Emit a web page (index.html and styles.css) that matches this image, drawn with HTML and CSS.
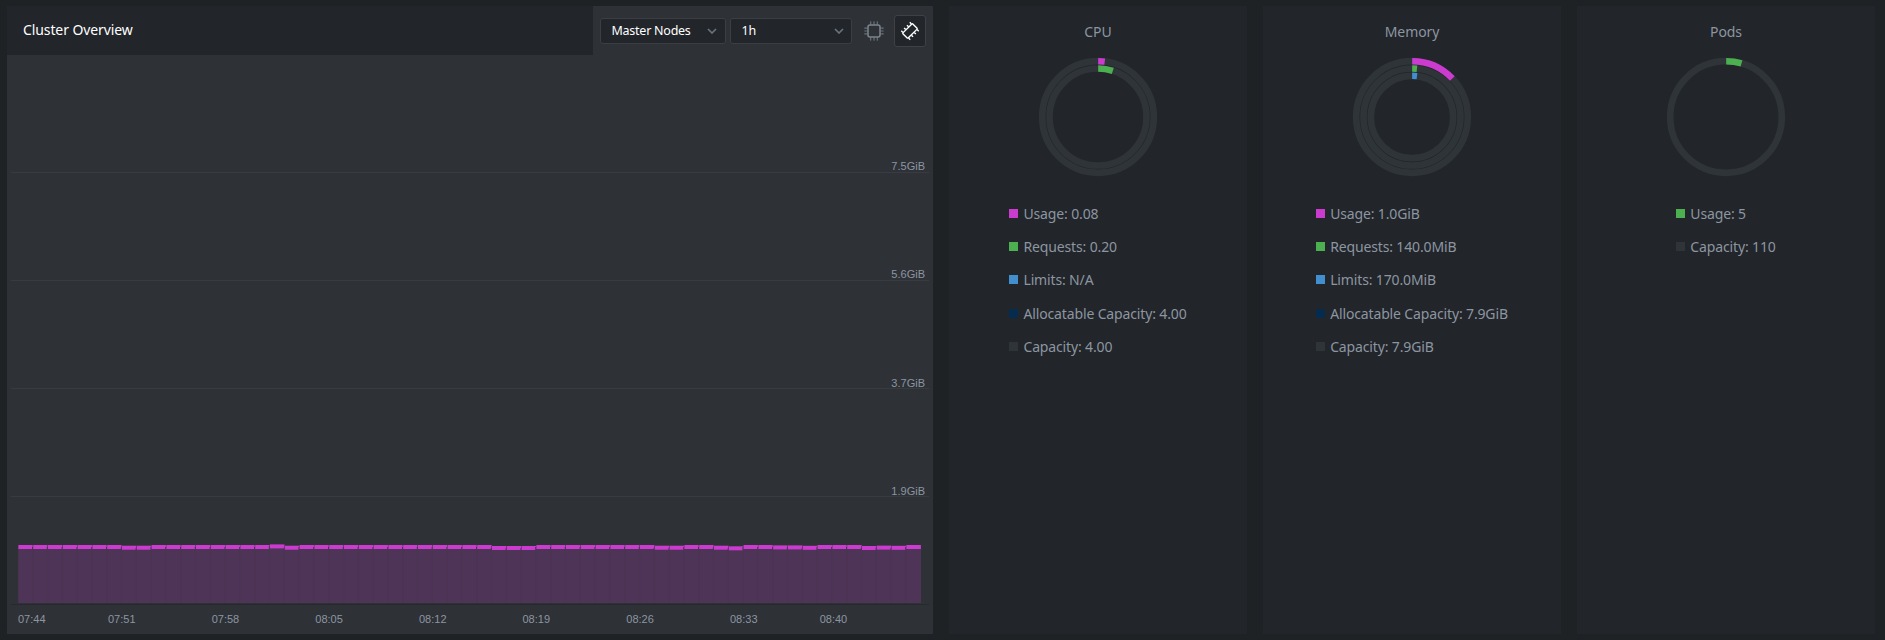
FILE: index.html
```html
<!DOCTYPE html>
<html lang="en">
<head>
<meta charset="utf-8">
<title>Cluster Overview</title>
<link rel="stylesheet" href="styles.css">
</head>
<body>
<main class="dashboard">
  <section class="overview">
    <header class="overview-head">
      <h1 class="overview-title">Cluster Overview</h1>
      <div class="controls">
        <div class="select select-nodes"><span>Master Nodes</span>
          <svg class="chevron" viewBox="0 0 10 6"><path d="M1 1l4 4 4-4"/></svg></div>
        <div class="select select-range"><span>1h</span>
          <svg class="chevron" viewBox="0 0 10 6"><path d="M1 1l4 4 4-4"/></svg></div>
        <button class="icon-btn" aria-label="CPU">
          <svg class="icon" viewBox="0 0 20 20"><rect x="4" y="4" width="12" height="12" rx="2" stroke-width="1.5"/><path stroke-width="1.2" stroke-dasharray="1.3 .5" d="M6.7 3.6V.4M10 3.6V.4M13.3 3.6V.4M6.7 16.4v3.2M10 16.4v3.2M13.3 16.4v3.2M3.6 7.2H.4M3.6 10H.4M3.6 12.8H.4M16.4 7.2h3.2M16.4 10h3.2M16.4 12.8h3.2"/></svg>
        </button>
        <button class="icon-btn active" aria-label="Memory">
          <svg class="icon" viewBox="0 0 20 20"><g transform="rotate(-45 10 10)"><rect x="3" y="6.3" width="14" height="7.4" rx="1" stroke-width="1.4"/><path stroke-width="1.4" d="M4 6V3.7M8 6V3.7M12 6V3.7M16 6V3.7M4 14v2.3M8 14v2.3M12 14v2.3M16 14v2.3"/></g></svg>
        </button>
      </div>
    </header>
    <svg class="chart" viewBox="7 55 926 579" width="926" height="579">
      <g class="grid"><path d="M11 172.5H929M11 280.5H929M11 388.5H929M11 496.5H929"/><path class="axis" d="M11 604.5H929"/></g>
      <g id="bars"></g>
      <g class="labels labels-y"><text x="925" y="170">7.5GiB</text><text x="925" y="278">5.6GiB</text><text x="925" y="387">3.7GiB</text><text x="925" y="495">1.9GiB</text></g>
      <g class="labels"><text x="18" y="623">07:44</text><text x="108" y="623">07:51</text><text x="211.7" y="623">07:58</text><text x="315.3" y="623">08:05</text><text x="419" y="623">08:12</text><text x="522.5" y="623">08:19</text><text x="626.3" y="623">08:26</text><text x="730" y="623">08:33</text><text x="819.7" y="623">08:40</text></g>
    </svg>
  </section>

  <section class="card">
    <h2 class="card-title">CPU</h2>
    <svg class="donut" viewBox="-60 -60 120 120">
      <circle class="track" r="55.8"/><circle class="track" r="48.5"/>
      <circle class="arc usage" r="55.8" pathLength="100" stroke-dasharray="1.9 98.1"/>
      <circle class="arc requests" r="48.5" pathLength="100" stroke-dasharray="4.9 95.1"/>
    </svg>
    <ul class="legend">
      <li><i class="swatch s-usage"></i>Usage: 0.08</li>
      <li><i class="swatch s-requests"></i>Requests: 0.20</li>
      <li><i class="swatch s-limits"></i>Limits: N/A</li>
      <li><i class="swatch s-alloc"></i>Allocatable Capacity: 4.00</li>
      <li><i class="swatch s-capacity"></i>Capacity: 4.00</li>
    </ul>
  </section>

  <section class="card">
    <h2 class="card-title">Memory</h2>
    <svg class="donut" viewBox="-60 -60 120 120">
      <circle class="track" r="55.8"/><circle class="track" r="48.5"/><circle class="track" r="41.2"/>
      <circle class="arc usage" r="55.8" pathLength="100" stroke-dasharray="12.8 87.2"/>
      <circle class="arc requests" r="48.5" pathLength="100" stroke-dasharray="1.6 98.4"/>
      <circle class="arc limits" r="41.2" pathLength="100" stroke-dasharray="1.9 98.1"/>
    </svg>
    <ul class="legend">
      <li><i class="swatch s-usage"></i>Usage: 1.0GiB</li>
      <li><i class="swatch s-requests"></i>Requests: 140.0MiB</li>
      <li><i class="swatch s-limits"></i>Limits: 170.0MiB</li>
      <li><i class="swatch s-alloc"></i>Allocatable Capacity: 7.9GiB</li>
      <li><i class="swatch s-capacity"></i>Capacity: 7.9GiB</li>
    </ul>
  </section>

  <section class="card">
    <h2 class="card-title">Pods</h2>
    <svg class="donut" viewBox="-60 -60 120 120">
      <circle class="track" r="55.8"/>
      <circle class="arc requests" r="55.8" pathLength="100" stroke-dasharray="4.45 95.55"/>
    </svg>
    <ul class="legend">
      <li><i class="swatch s-requests"></i>Usage: 5</li>
      <li><i class="swatch s-capacity"></i>Capacity: 110</li>
    </ul>
  </section>
</main>
<script src="chart.js"></script>
</body>
</html>
```
FILE: styles.css
```css
* { box-sizing: border-box; }
body {
  margin: 0;
  background: #1e2224;
  color: #8c96a1;
  font-family: "Noto Sans", sans-serif;
  font-size: 14px;
}
.dashboard {
  display: grid;
  grid-template-columns: 926px 298px 298px 298px;
  column-gap: 16px;
  height: 640px;
  padding: 6px 10px 6px 7px;
}
.overview {
  display: flex;
  flex-direction: column;
  background: #2e3136;
}
.overview-head { display: flex; height: 49px; }
.overview-title {
  width: 586px;
  margin: 0;
  padding-left: 16px;
  background: #22252a;
  color: #fff;
  font-size: 14px;
  font-weight: 400;
  line-height: 48px;
  letter-spacing: -.1px;
}
.controls {
  display: flex;
  align-items: center;
  padding-left: 7px;
}
.select {
  display: flex;
  align-items: center;
  justify-content: space-between;
  height: 26px;
  margin-right: 4px;
  padding: 0 8px 0 10.5px;
  border: 1px solid #3b3f44;
  border-radius: 3px;
  background: #22252a;
  color: #fff;
  font-size: 12.5px;
  line-height: 24px;
  letter-spacing: -.25px;
}
.select-nodes { width: 126px; }
.select-range { width: 122px; padding-right: 7px; margin-right: 6px; }
.chevron { width: 10px; height: 6px; fill: none; stroke: #6b747d; stroke-width: 1.6; }
.icon-btn {
  display: flex;
  align-items: center;
  justify-content: center;
  width: 32px;
  height: 32px;
  margin-right: 4px;
  padding: 0;
  border: 1px solid transparent;
  border-radius: 3px;
  background: none;
  color: #7b8590;
}
.icon-btn.active { border-color: #3e4247; background: #22252a; color: #fff; }
.icon { width: 20px; height: 20px; fill: none; stroke: currentColor; }
.chart { display: block; }
.grid path { fill: none; stroke: #383b40; }
.grid .axis { stroke: #26292d; }
.labels { fill: #8c96a1; font: 11px "Liberation Sans", Arial, sans-serif; }
.labels-y { text-anchor: end; }
.bar { fill: #4e3456; }
.bar-edge { fill: #4b3451; }
.bar-cap { fill: #cc3bd0; }
.card {
  display: flex;
  flex-direction: column;
  align-items: center;
  background: #22252a;
}
.card-title {
  height: 51px;
  margin: 0;
  padding-top: 16px;
  font-size: 14px;
  font-weight: 400;
  line-height: 20px;
  letter-spacing: -.1px;
}
.donut { width: 120px; height: 120px; fill: none; }
.track { stroke: #2f3438; stroke-width: 6.7; }
.arc { stroke-width: 6.5; transform: rotate(-89.8deg); }
.usage { stroke: #cc3bd0; }
.requests { stroke: #4caf50; }
.limits { stroke: #428fd0; }
.legend {
  display: grid;
  grid-template-rows: 33px 33px 34px 33px 33px;
  margin: 26px 0 0;
  padding: 0;
  list-style: none;
  letter-spacing: -.14px;
}
.legend li {
  display: flex;
  align-items: center;
  height: 21px;
  line-height: 21px;
}
.swatch { width: 9px; height: 9px; margin-right: 5px; }
.s-usage { background: #cc3bd0; }
.s-requests { background: #4caf50; }
.s-limits { background: #428fd0; }
.s-alloc { background: #052b4e; }
.s-capacity { background: #2f3438; }
```
FILE: chart.js
```js
// One column per minute; values are small offsets from the usual column top.
const offsets = { 7: 0.7, 8: 0.7, 17: -0.6, 18: 0.7, 32: 1, 33: 1, 34: 1, 43: 0.7, 44: 0.7, 47: 0.7, 48: 1.3, 51: 0.4, 52: 0.4, 53: 0.8, 57: 1, 58: 0.6, 59: 0.8 };
const NS = "http://www.w3.org/2000/svg";
const bars = document.getElementById("bars");
const pitch = 14.8;

function rect(cls, x, y, width, height) {
  const r = document.createElementNS(NS, "rect");
  r.setAttribute("class", cls);
  r.setAttribute("x", x);
  r.setAttribute("y", y);
  r.setAttribute("width", width);
  r.setAttribute("height", height);
  bars.appendChild(r);
}

// The body of each column reaches slightly under its left neighbour so no seam shows.
for (let i = 0; i < 61; i++) {
  const x = 18.2 + i * pitch;
  const top = 545 + (offsets[i] || 0);
  const overlap = i ? 1 : 0;
  rect("bar", x - overlap, top + 2, pitch + overlap, 601 - top);
  rect("bar-edge", x - 0.3, top, 0.6, 603 - top);
  rect("bar-cap", x + 0.2, top, pitch - 0.3, 4);
}
```
